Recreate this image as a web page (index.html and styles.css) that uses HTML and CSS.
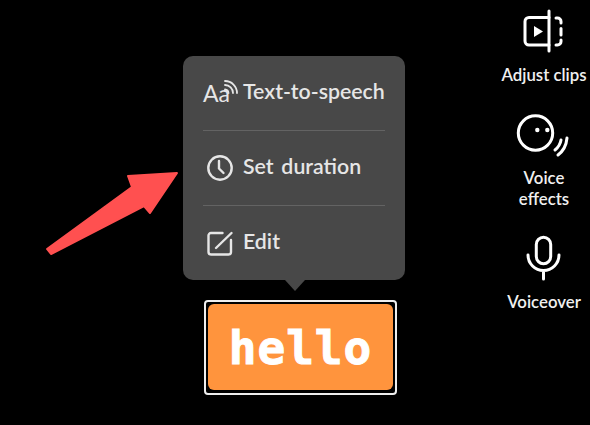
FILE: index.html
```html
<!DOCTYPE html>
<html lang="en">
<head>
    <meta charset="UTF-8">
    <meta name="viewport" content="width=device-width, initial-scale=1.0">
    <title>Text clip menu</title>
    <link rel="stylesheet" href="styles.css">
</head>
<body>
    <div class="stage">
        <div class="clip-column">
            <div class="menu">
                <div class="menu-row">
                    <svg class="menu-icon" viewBox="0 0 34 30">
                        <text class="aa" x="0" y="24">Aa</text>
                        <path class="thin" d="M22 3 a12 12 0 0 1 12 12 M22 7 a8 8 0 0 1 8 8 M22 11.500 a4 4 0 0 1 3.500 3.500" />
                    </svg>
                    <span>Text-to-speech</span>
                </div>
                <div class="menu-row">
                    <svg class="menu-icon" viewBox="0 0 34 30">
                        <circle cx="17" cy="15" r="11.700" />
                        <path d="M16 8 v7.500 l4.500 4.500" />
                    </svg>
                    <span>Set duration</span>
                </div>
                <div class="menu-row">
                    <svg class="menu-icon" viewBox="0 0 34 30">
                        <path d="M19.500 5 H8 a2.500 2.500 0 0 0 -2.500 2.500 V24 a2.500 2.500 0 0 0 2.500 2.500 H25.500 a2.500 2.500 0 0 0 2.500 -2.500 V12" />
                        <path d="M13 20 L28.500 5" />
                    </svg>
                    <span>Edit</span>
                </div>
            </div>
            <div class="clip">
                <div class="clip-fill">hello</div>
            </div>
        </div>

        <div class="sidebar">
            <div class="tool">
                <svg class="tool-icon" viewBox="0 0 60 48">
                    <path d="M35 9.500 H15 a4 4 0 0 0 -4 4 V33 a4 4 0 0 0 4 4 H35" />
                    <path d="M35 3 V43" />
                    <path d="M42 10 h1.500 a3.500 3.500 0 0 1 3.500 3.500 v1.500 M47 20.500 v6.500 M47 32 v1.500 a3.500 3.500 0 0 1 -3.500 3.500 h-1.500" />
                    <path class="solid" d="M20 18 L29 23.500 L20 29 Z" />
                </svg>
                <div class="tool-label">Adjust clips</div>
            </div>
            <div class="tool">
                <svg class="tool-icon" viewBox="0 0 60 48">
                    <circle cx="21.500" cy="22" r="17.200" />
                    <circle class="solid" cx="23.300" cy="19" r="2.200" />
                    <circle class="solid" cx="33.300" cy="19" r="2.200" />
                    <path d="M41 39 Q46 35 47 29 M44 44 Q52 38 53 27" />
                </svg>
                <div class="tool-label">Voice<br>effects</div>
            </div>
            <div class="tool">
                <svg class="tool-icon" viewBox="0 0 60 48">
                    <rect x="22.300" y="2.300" width="14.400" height="26.400" rx="7.200" />
                    <path d="M14 20 a15.500 15.500 0 0 0 31 0 M29.500 35.500 V44" />
                </svg>
                <div class="tool-label">Voiceover</div>
            </div>
        </div>

        <svg class="arrow" viewBox="0 0 150 100">
            <path d="M12 89 L16 94 L109 46 L115 53 L142 13 L93 16 L97 27 Z" />
        </svg>
    </div>
</body>
</html>
```

FILE: styles.css
```css
* {
    box-sizing: border-box;
}
body {
    margin: 0;
    background: black;
    color: white;
    font-family: Lato, "Open Sans", sans-serif;
}
.stage {
    position: relative;
    display: flex;
    width: 590px;
    height: 425px;
    overflow: hidden;
    padding-left: 183px;
}
.clip-column {
    width: 222px;
    padding-top: 56px;
}
.menu {
    position: relative;
    height: 224px;
    padding: 0 20px;
    background: #484848;
    border-radius: 10px;
}
.menu::after {
    content: "";
    position: absolute;
    left: 102px;
    bottom: -11px;
    border-top: 11px solid #484848;
    border-left: 10.500px solid transparent;
    border-right: 10.500px solid transparent;
}
.menu-row {
    display: flex;
    align-items: center;
    gap: 6px;
    height: 75px;
    border-bottom: 1px solid #636363;
    font-size: 21.300px;
    font-weight: 600;
    word-spacing: 2.500px;
    color: #e6e6e6;
    white-space: nowrap;
}
.menu-row span {
    margin-top: -4px;
}
.menu-row:last-child {
    height: 74px;
    border-bottom: none;
}
.menu-icon {
    width: 34px;
    height: 30px;
    flex: none;
    overflow: visible;
    fill: none;
    stroke: #e6e6e6;
    stroke-width: 2.400;
    stroke-linecap: round;
    stroke-linejoin: round;
}
.menu-icon .thin {
    stroke-width: 1.800;
}
.aa {
    fill: #e6e6e6;
    stroke: none;
    font-size: 23px;
    font-weight: 400;
}
.clip {
    width: 193px;
    height: 95px;
    margin: 20px 0 0 21px;
    padding: 2px;
    border: 2px solid #eeeeee;
    border-radius: 4px;
}
.clip-fill {
    display: flex;
    justify-content: center;
    align-items: center;
    height: 86px;
    padding-top: 2px;
    background: #ff943d;
    border-radius: 6px;
    font-family: "DejaVu Sans Mono", monospace;
    font-size: 46px;
    font-weight: 700;
    letter-spacing: 1px;
    -webkit-text-stroke: 1px white;
}
.sidebar {
    display: flex;
    flex-direction: column;
    gap: 26px;
    width: 92px;
    margin-left: auto;
    padding-top: 8px;
}
.tool {
    display: flex;
    flex-direction: column;
    align-items: center;
    gap: 8px;
}
.tool-icon {
    width: 60px;
    height: 48px;
    fill: none;
    stroke: white;
    stroke-width: 3;
    stroke-linecap: round;
    stroke-linejoin: round;
}
.tool-icon .solid {
    fill: white;
    stroke: none;
}
.tool-label {
    font-size: 16.800px;
    font-weight: 600;
    line-height: 21px;
    text-align: center;
    white-space: nowrap;
    color: #f0f0f0;
}
.arrow {
    position: absolute;
    left: 35px;
    top: 160px;
    width: 150px;
    height: 100px;
    fill: #ff5050;
    stroke: #ff5050;
    stroke-width: 2;
    stroke-linejoin: round;
}
```
